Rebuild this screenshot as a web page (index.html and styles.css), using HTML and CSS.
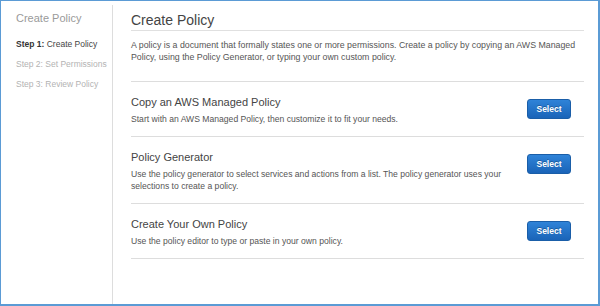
FILE: index.html
```html
<!DOCTYPE html>
<html lang="en">
<head>
    <meta charset="UTF-8">
    <title>Create Policy</title>
    <link rel="stylesheet" href="styles.css">
</head>
<body>
    <div class="frame">
        <div class="sidebar">
            <h2 class="side-title">Create Policy</h2>
            <ul class="steps">
                <li class="step active"><b>Step 1:</b> Create Policy</li>
                <li class="step">Step 2: Set Permissions</li>
                <li class="step">Step 3: Review Policy</li>
            </ul>
        </div>
        <div class="main">
            <h1 class="title">Create Policy</h1>
            <p class="intro">A policy is a document that formally states one or more permissions. Create a policy by copying an AWS Managed Policy, using the Policy Generator, or typing your own custom policy.</p>

            <div class="option first">
                <div class="option-text">
                    <h3>Copy an AWS Managed Policy</h3>
                    <p>Start with an AWS Managed Policy, then customize it to fit your needs.</p>
                </div>
                <button class="select-btn">Select</button>
            </div>
            <div class="option">
                <div class="option-text">
                    <h3>Policy Generator</h3>
                    <p>Use the policy generator to select services and actions from a list. The policy generator uses your selections to create a policy.</p>
                </div>
                <button class="select-btn">Select</button>
            </div>
            <div class="option">
                <div class="option-text">
                    <h3>Create Your Own Policy</h3>
                    <p>Use the policy editor to type or paste in your own policy.</p>
                </div>
                <button class="select-btn">Select</button>
            </div>
        </div>
    </div>
</body>
</html>
```

FILE: styles.css
```css
body {
    margin: 0;
    font-family: "Liberation Sans", Arial, sans-serif;
    background-color: #ffffff;
}
.frame {
    width: 600px;
    height: 306px;
    box-sizing: border-box;
    border: 1px solid #5b9bd5;
    border-right-width: 2px;
    border-bottom-width: 2px;
    display: flex;
    background-color: #ffffff;
}
.sidebar {
    width: 111px;
    box-sizing: border-box;
    padding: 10px 0 0 15px;
}
.side-title {
    margin: 0;
    font-size: 11px;
    line-height: 14px;
    font-weight: normal;
    color: #9a9a9a;
}
.steps {
    list-style: none;
    margin: 13px 0 0 0;
    padding: 0;
}
.step {
    font-size: 8.5px;
    line-height: 12px;
    margin-bottom: 8px;
    color: #b3b3b3;
    white-space: nowrap;
}
.step.active {
    color: #444444;
}
.step.active b {
    color: #333333;
}
.main {
    flex: 1;
    margin-top: 4px;
    border-left: 1px solid #dddddd;
    padding: 0 14px 0 18px;
}
.title {
    margin: 0;
    padding: 6px 0 1px 0;
    font-size: 14px;
    line-height: 18px;
    font-weight: normal;
    color: #444444;
    border-bottom: 1px solid #e0e0e0;
}
.intro {
    margin: 8px 0 18px 0;
    font-size: 8.8px;
    line-height: 12px;
    color: #555555;
}
.option {
    display: flex;
    align-items: flex-start;
    padding: 13px 0 11px 0;
    border-bottom: 1px solid #dddddd;
}
.option.first {
    border-top: 1px solid #dddddd;
}
.option-text {
    flex: 1;
}
.option-text h3 {
    margin: 0 0 4px 0;
    font-size: 11px;
    line-height: 14px;
    font-weight: normal;
    color: #444444;
}
.option-text p {
    margin: 0;
    max-width: 385px;
    font-size: 8.6px;
    line-height: 12px;
    color: #555555;
}
.select-btn {
    margin: 4px 13px 0 0;
    width: 44px;
    height: 20px;
    padding: 0;
    font-family: "Liberation Sans", Arial, sans-serif;
    font-size: 8.5px;
    font-weight: bold;
    color: #ffffff;
    background: linear-gradient(#2f83d8, #1a64b8);
    border: 1px solid #1a5ea8;
    border-radius: 3px;
    text-shadow: 0 -1px 0 rgba(0, 0, 0, 0.25);
}
```
